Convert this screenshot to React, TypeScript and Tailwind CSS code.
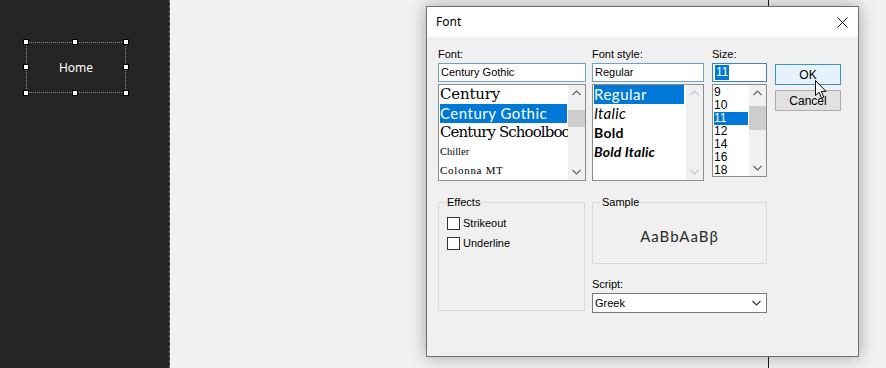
import React from "react";

function Handle({ pos }: { pos: string }) {
  return <div className={`absolute w-[6px] h-[6px] bg-white border border-black ${pos}`} />;
}

function Chevron({ up, color }: { up?: boolean; color: string }) {
  return (
    <svg width="9" height="6" viewBox="0 0 9 6">
      <path d={up ? "M0.5 5 L4.5 1 L8.5 5" : "M0.5 1 L4.5 5 L8.5 1"} fill="none" stroke={color} strokeWidth="1.1" />
    </svg>
  );
}

function ScrollBar({ thumbTop, thumbH, disabled }: { thumbTop: number; thumbH: number; disabled?: boolean }) {
  const c = disabled ? "#c4c4c4" : "#606060";
  return (
    <div className="relative w-[17px] h-full bg-[#f0f0f0] flex flex-col items-center justify-between py-[5px]">
      <Chevron up color={c} />
      {thumbH > 0 && (
        <div className="absolute left-0 w-[17px] bg-[#cdcdcd]" style={{ top: thumbTop, height: thumbH }} />
      )}
      <Chevron color={c} />
    </div>
  );
}

function Selection() {
  return (
    <div className="absolute left-[26px] top-[42px] w-[100px] h-[51px] border border-dotted border-[#8a8a8a] flex items-center justify-center">
      <span className="text-white text-[12px] font-['Noto_Sans',sans-serif]">Home</span>
      <Handle pos="left-[-4px] top-[-4px]" />
      <Handle pos="left-[45px] top-[-4px]" />
      <Handle pos="right-[-4px] top-[-4px]" />
      <Handle pos="left-[-4px] top-[21px]" />
      <Handle pos="right-[-4px] top-[21px]" />
      <Handle pos="left-[-4px] bottom-[-4px]" />
      <Handle pos="left-[45px] bottom-[-4px]" />
      <Handle pos="right-[-4px] bottom-[-4px]" />
    </div>
  );
}

function Dialog() {
  return (
    <div className="absolute left-[256px] top-[6px] w-[433px] h-[351px] border border-[#6f6f6f] bg-[#f0f0f0] shadow-[0_0_16px_rgba(0,0,0,0.32)] flex flex-col text-black font-['Liberation_Sans',Arial,sans-serif] text-[11px]">
      <div className="h-[30px] bg-white flex items-center justify-between pl-[9px] pr-[10px]">
        <span className="text-[12px] font-['Noto_Sans',sans-serif]">Font</span>
        <svg width="11" height="11" viewBox="0 0 11 11">
          <path d="M0.5 0.5 L10.5 10.5 M10.5 0.5 L0.5 10.5" stroke="#111" strokeWidth="1" />
        </svg>
      </div>
      <div className="flex flex-col pl-[11px] pt-[9px]">
        <div className="flex items-start">
          {/* Font column */}
          <div className="w-[148px] flex flex-col">
            <div className="h-[17px] leading-[17px]">Font:</div>
            <div className="h-[19px] border border-[#6fa3c4] bg-white pl-[2px] leading-[17px]">Century Gothic</div>
            <div className="mt-[2px] h-[97px] border border-[#8c8c8c] bg-white flex">
              <div className="flex-1 p-[0_1px] overflow-hidden whitespace-nowrap">
                <div className="h-[19px] leading-[19px] text-[15px] font-['DejaVu_Serif',serif] tracking-[-0.2px]">Century</div>
                <div className="h-[19px] leading-[19px] text-[15px] bg-[#0078d7] text-white font-['Lato',sans-serif] tracking-[0.5px]">Century Gothic</div>
                <div className="h-[19px] leading-[19px] text-[15px] font-['DejaVu_Serif',serif] tracking-[-0.9px]">Century Schoolbook</div>
                <div className="h-[19px] leading-[19px] text-[10.5px] font-['Liberation_Serif',serif]">Chiller</div>
                <div className="h-[19px] leading-[19px] text-[11px] font-['Liberation_Serif',serif] tracking-[0.7px]">Colonna MT</div>
              </div>
              <ScrollBar thumbTop={25} thumbH={17} />
            </div>
          </div>
          {/* Font style column */}
          <div className="ml-[6px] w-[112px] flex flex-col">
            <div className="h-[17px] leading-[17px]">Font style:</div>
            <div className="h-[19px] border border-[#6fa3c4] bg-white pl-[2px] leading-[17px]">Regular</div>
            <div className="mt-[2px] h-[97px] border border-[#8c8c8c] bg-white flex">
              <div className="flex-1 pl-[1px] pr-[2px] overflow-hidden whitespace-nowrap font-['Lato',sans-serif] text-[15px]">
                <div className="h-[19px] leading-[19px] bg-[#0078d7] text-white tracking-[0.5px]">Regular</div>
                <div className="h-[19px] leading-[19px] italic tracking-[0.3px]">Italic</div>
                <div className="h-[19px] leading-[19px] font-bold text-[14px] tracking-[0.3px]">Bold</div>
                <div className="h-[19px] leading-[19px] font-bold italic text-[14px] tracking-[0.2px]">Bold Italic</div>
              </div>
              <ScrollBar thumbTop={0} thumbH={0} disabled />
            </div>
          </div>
          {/* Size column */}
          <div className="ml-[8px] w-[55px] flex flex-col">
            <div className="h-[17px] leading-[17px]">Size:</div>
            <div className="h-[19px] border border-[#3f86b8] bg-white pl-[2px] flex items-center">
              <span className="bg-[#0078d7] text-white text-[12px] leading-[15px] px-[1px]">11</span>
            </div>
            <div className="mt-[2px] h-[93px] border border-[#8c8c8c] bg-white flex">
              <div className="flex-1 pl-[1px] pr-[1px] pt-[1px] overflow-hidden text-[12px]">
                <div className="h-[13px] leading-[13px]">9</div>
                <div className="h-[13px] leading-[13px]">10</div>
                <div className="h-[13px] leading-[13px] bg-[#0078d7] text-white">11</div>
                <div className="h-[13px] leading-[13px]">12</div>
                <div className="h-[13px] leading-[13px]">14</div>
                <div className="h-[13px] leading-[13px]">16</div>
                <div className="h-[13px] leading-[13px]">18</div>
              </div>
              <ScrollBar thumbTop={21} thumbH={24} />
            </div>
          </div>
          {/* Buttons */}
          <div className="ml-[8px] mt-[18px] w-[66px] flex flex-col gap-[5px] text-[12px]">
            <div className="h-[21px] border border-[#3c93c0] bg-[#e5f1fb] flex items-center justify-center">OK</div>
            <div className="h-[21px] border border-[#adadad] bg-[#e1e1e1] flex items-center justify-center">Cancel</div>
          </div>
        </div>
        {/* Bottom row */}
        <div className="flex items-start mt-[21px]">
          <div className="relative w-[147px] h-[109px] border border-[#d9d9d9] flex flex-col pl-[8px] pt-[14px] gap-[7px] text-[11px]">
            <span className="absolute left-[7px] top-[-9px] px-[1px] bg-[#f0f0f0] leading-[16px]">Effects</span>
            <div className="flex items-center h-[13px]">
              <div className="w-[13px] h-[13px] border border-[#333] bg-white" />
              <span className="ml-[3px]">Strikeout</span>
            </div>
            <div className="flex items-center h-[13px]">
              <div className="w-[13px] h-[13px] border border-[#333] bg-white" />
              <span className="ml-[3px]">Underline</span>
            </div>
          </div>
          <div className="ml-[7px] w-[175px] flex flex-col">
            <div className="relative h-[62px] border border-[#d9d9d9] flex items-center justify-center pt-[6px]">
              <span className="absolute left-[8px] top-[-9px] px-[1px] bg-[#f0f0f0] leading-[16px]">Sample</span>
              <span className="font-['Lato',sans-serif] text-[15px] tracking-[1px] text-[#2a2a2a]">AaBbAaBβ</span>
            </div>
            <div className="mt-[12px] h-[16px] leading-[16px]">Script:</div>
            <div className="mt-[1px] h-[20px] border border-[#7a7a7a] bg-white flex items-center justify-between pl-[2px] pr-[5px]">
              <span>Greek</span>
              <Chevron color="#333" />
            </div>
          </div>
        </div>
      </div>
      {/* mouse cursor */}
      <svg className="absolute left-[388px] top-[73px]" width="13" height="20" viewBox="0 0 13 20">
        <path d="M0.5 0.5 L0.5 15.5 L4 12.2 L6.6 18.2 L8.8 17.2 L6.3 11.4 L11 11.4 Z" fill="#fff" stroke="#000" strokeWidth="1" />
      </svg>
    </div>
  );
}

export default function App() {
  return (
    <div className="relative flex w-[886px] h-[368px] overflow-hidden bg-[#f0f1f3]">
      <div className="relative w-[170px] h-full bg-[#252525] border-r border-dashed border-[#707070]">
        <Selection />
      </div>
      <div className="relative flex-1">
        <div className="absolute left-[598px] top-0 h-full w-px bg-[#1e1e1e]" />
        <Dialog />
      </div>
    </div>
  );
}
